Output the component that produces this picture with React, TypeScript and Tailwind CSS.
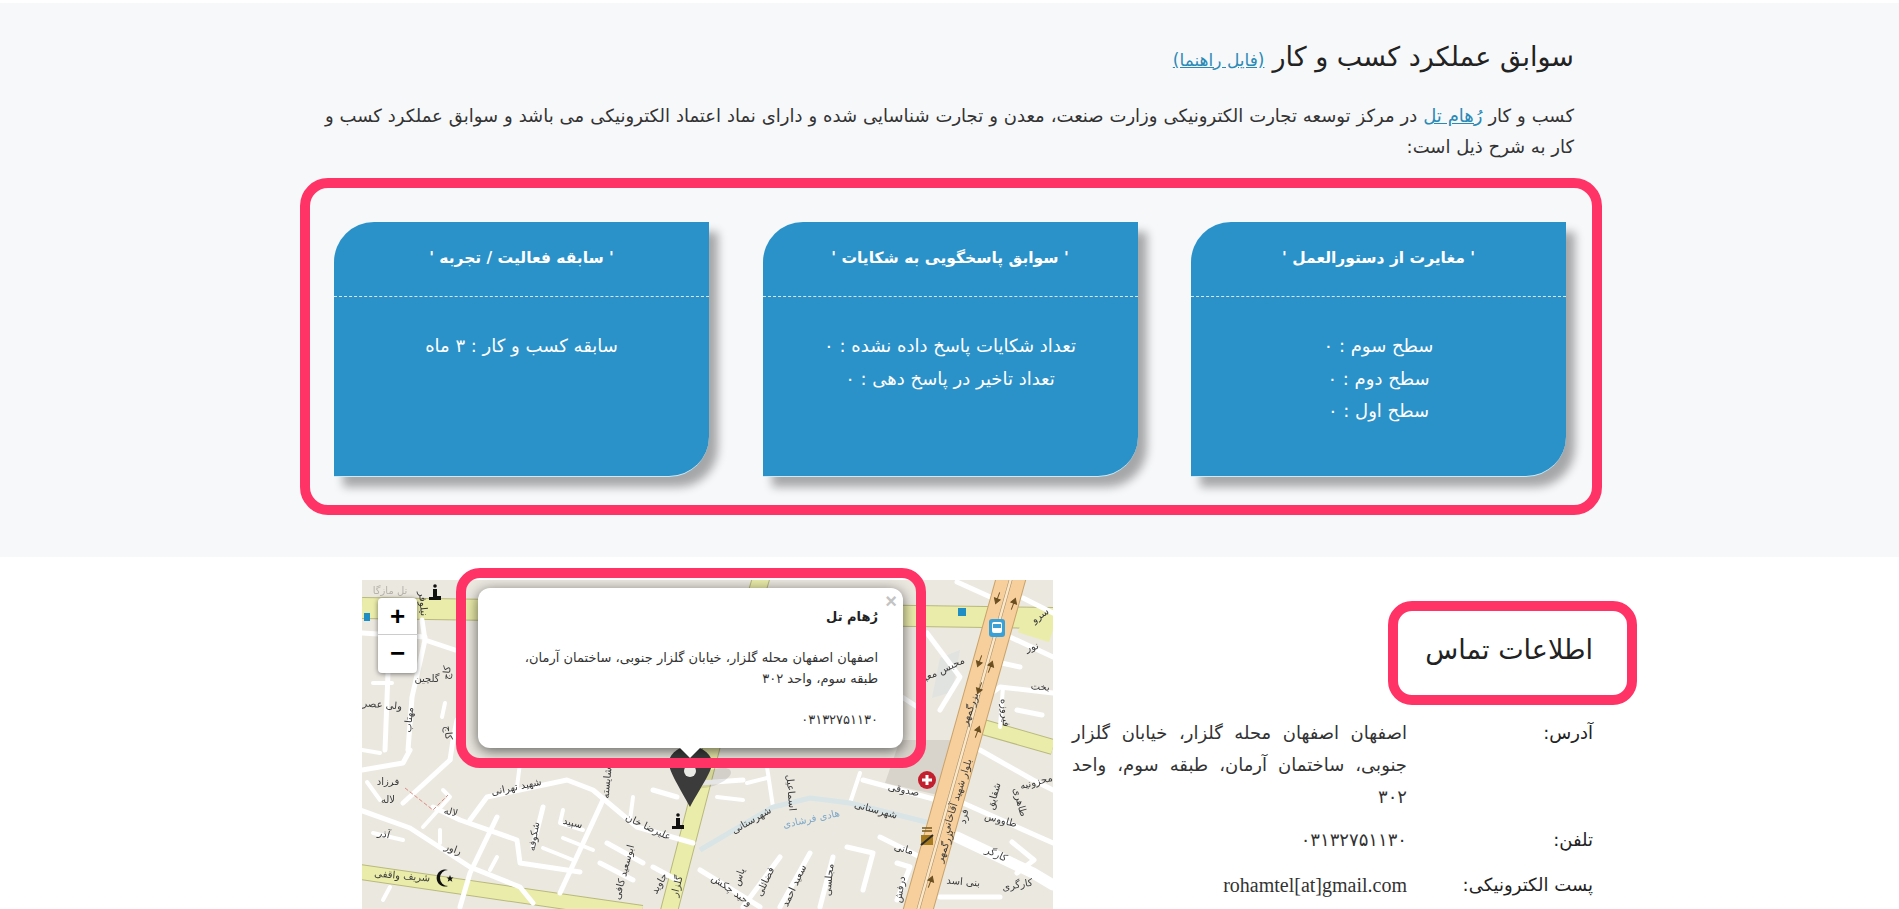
const fa = "font-['DejaVu_Sans',sans-serif]";

const cards = [
  { title: "' مغایرت از دستورالعمل '", lines: ["سطح سوم : ۰", "سطح دوم : ۰", "سطح اول : ۰"] },
  { title: "' سوابق پاسخگویی به شکایات '", lines: ["تعداد شکایات پاسخ داده نشده : ۰", "تعداد تاخیر در پاسخ دهی : ۰"] },
  { title: "' سابقه فعالیت / تجربه '", lines: ["سابقه کسب و کار : ۳ ماه"] },
];

const roads: [number, string][] = [
  [5, "88,180 41,223"],
  [5, "-2,230 48,248 108,287 158,307 171,323"],
  [5, "71,227 98,240 155,260 158,283 218,292"],
  [5, "135,237 108,293 98,327"],
  [5, "108,240 125,217 205,200 231,210 275,247 331,263"],
  [5, "241,220 198,313"],
  [5, "181,227 171,267"],
  [4, "201,230 198,243 221,250"],
  [4, "201,258 231,270"],
  [4, "181,268 211,280"],
  [5, "245,263 281,283"],
  [5, "238,283 271,300"],
  [4, "271,217 268,240"],
  [5, "291,287 315,300"],
  [5, "291,210 315,217"],
  [4, "5,202 18,220"],
  [4, "11,253 41,260"],
  [4, "81,210 88,217 61,247"],
  [5, "88,180 91,160 95,140"],
  [4, "158,183 155,207"],
  [5, "48,170 41,183 0,190"],
  [4, "0,170 18,173"],
  [4, "78,250 78,263"],
  [4, "135,277 128,290"],
  [4, "28,307 21,320"],
  [5, "501,200 575,220"],
  [5, "601,223 691,263"],
  [5, "618,170 671,200 691,210"],
  [4, "405,187 411,227"],
  [4, "498,193 488,223"],
  [5, "518,257 558,277"],
  [11, "595,257 671,293 691,305"],
  [5, "485,267 511,273 501,310"],
  [5, "418,277 381,327"],
  [5, "448,273 418,327"],
  [5, "471,277 458,327"],
  [5, "338,290 398,327"],
  [5, "535,283 548,287 535,320"],
  [5, "578,317 638,317"],
  [5, "338,203 381,200"],
  [4, "355,217 381,220"],
  [4, "385,203 405,198"],
  [5, "595,2 635,20"],
  [5, "661,18 691,33"],
  [5, "648,57 691,77"],
  [5, "565,53 598,97 578,130"],
  [5, "635,82 658,87"],
  [5, "620,120 638,107 691,113"],
  [4, "641,107 638,147"],
  [5, "60,40 63,60 50,117 46,170"],
  [5, "0,53 63,57"],
  [5, "63,60 93,70"],
  [5, "26,93 23,170"],
  [4, "11,103 30,103"],
  [4, "83,123 80,137"],
  [5, "650,262 672,280 655,293"],
  [5, "655,130 680,135"],
  [5, "540,117 560,130"],
];

const labels: [number, number, number, string, string?][] = [
  [26, 205, 0, "فرزاد"],
  [26, 223, 0, "لاله"],
  [88, 235, 15, "لاله"],
  [21, 257, 15, "آذر"],
  [90, 272, 20, "راور"],
  [40, 299, 5, "شریف واقفی"],
  [155, 210, -12, "شهید تهرانی"],
  [175, 257, -80, "شکوفه"],
  [210, 246, 15, "سپید"],
  [285, 250, 25, "علیرضا خان"],
  [265, 293, -75, "ابوسعید کافی"],
  [300, 305, -60, "جاوید"],
  [318, 307, -75, "گلزار"],
  [248, 203, -85, "شایسته"],
  [541, 213, 12, "صدوقی"],
  [513, 233, 15, "شهرستانی"],
  [391, 243, -30, "شهرستانی"],
  [450, 242, -12, "هادی فرشادی", "#7fa9c9"],
  [426, 213, 85, "اسماعیل"],
  [586, 267, -70, "بزرگمهر"],
  [598, 217, -72, "بلوار شهید آقاخانی"],
  [638, 243, 15, "طاووس"],
  [635, 217, -75, "شقایق"],
  [655, 223, 75, "طاهری"],
  [605, 237, -80, "فرد"],
  [633, 277, 25, "کارگر"],
  [541, 272, 15, "مانی"],
  [601, 305, 5, "بنی اسد"],
  [656, 308, -10, "کارگری"],
  [541, 310, -80, "درفش"],
  [380, 298, -70, "یاس"],
  [406, 303, -65, "فضائلی"],
  [435, 307, -65, "سعید احمد"],
  [470, 300, -85, "مجلسی"],
  [368, 313, 35, "وحید چکش"],
  [675, 205, -15, "محزونیه"],
  [581, 93, -25, "محبس معبر"],
  [671, 70, -15, "نور"],
  [678, 110, 5, "بخت"],
  [640, 133, 85, "فیروزه"],
  [611, 130, -70, "بزرگمهر"],
  [680, 38, -35, "سرو"],
  [65, 102, 0, "گلچین"],
  [20, 128, 5, "ولی عصر"],
  [50, 140, -85, "مهتاب"],
  [28, 14, 0, "تل مازگا", "#b5b2aa"],
  [88, 93, -85, "کاج"],
  [58, 24, 85, "نیلوفر"],
  [83, 153, 85, "کاج"],
];

const arrows: [number, number, number][] = [
  [636, 17, 110],
  [651, 25, -70],
  [618, 80, 110],
  [628, 88, -70],
  [618, 107, 110],
  [615, 153, -70],
  [568, 303, -70],
];

function InfoGlyph({ x, y }: { x: number; y: number }) {
  return (
    <g transform={`translate(${x} ${y})`} fill="#111">
      <circle cx="0" cy="-7" r="1.8" />
      <path d="M-2 -4 H2 V3 H6 V7 H-6 V4 H-2 Z" />
    </g>
  );
}

function MapArt() {
  return (
    <svg viewBox="0 0 691 329" className="block w-full h-full blur-[0.5px]">
      <rect width="691" height="329" fill="#ebe8e0" />
      <polygon points="523,203 538,160 591,160 576,215" fill="#d8d3cb" />
      <polygon points="578,78 598,70 590,112 570,118" fill="#e0e3e0" />
      {/* yellow roads */}
      <g fill="none" stroke="#b9b97c">
        <polyline points="0,28 691,38" strokeWidth="22" />
        <polyline points="400,-5 350,165 306,335" strokeWidth="18" />
        <polyline points="-2,292 280,333" strokeWidth="16" />
        <polyline points="621,147 691,167" strokeWidth="16" />
      </g>
      <g fill="none" stroke="#eaecaa">
        <polyline points="0,28 691,38" strokeWidth="20" />
        <polyline points="660,40 691,50" strokeWidth="26" />
        <polyline points="400,-5 350,165 306,335" strokeWidth="16" />
        <polyline points="-2,292 280,333" strokeWidth="14" />
        <polyline points="621,147 691,167" strokeWidth="14" />
      </g>
      {/* white side streets */}
      <g fill="none" stroke="#fff" strokeLinecap="round" strokeLinejoin="round">
        {roads.map(([w, p], i) => (
          <polyline key={i} points={p} strokeWidth={w} />
        ))}
      </g>
      <polyline
        points="338,270 411,227 448,218 488,223 568,243"
        fill="none"
        stroke="#d8e4e6"
        strokeWidth="5"
      />
      <polyline points="43,208 71,230 86,215" fill="none" stroke="#e08a80" strokeWidth="1" strokeDasharray="4 2" />
      {/* highway */}
      <line x1="650" y1="-5" x2="555" y2="334" stroke="#c9a26a" strokeWidth="30" />
      <line x1="650" y1="-5" x2="555" y2="334" stroke="#f6cf9c" strokeWidth="28" />
      <line x1="650" y1="-5" x2="555" y2="334" stroke="#a08a68" strokeWidth="3.5" />
      <line x1="650" y1="-5" x2="555" y2="334" stroke="#fbe6c6" strokeWidth="2.5" />
      {arrows.map(([x, y, r], i) => (
        <path
          key={i}
          d="M-5 0 H2 M2 -3 L7 0 L2 3 Z"
          transform={`translate(${x} ${y}) rotate(${r})`}
          stroke="#6b4e20"
          fill="#6b4e20"
        />
      ))}
      {/* labels */}
      <g className={fa} fontSize="10" textAnchor="middle">
        {labels.map(([x, y, r, t, c], i) => (
          <text key={i} x={x} y={y} fill={c ?? "#3a3a3a"} transform={`rotate(${r} ${x} ${y})`}>
            {t}
          </text>
        ))}
      </g>
      {/* map symbols */}
      <rect x="596" y="28" width="8" height="8" fill="#1f8ec4" />
      <rect x="2" y="33" width="6" height="8" fill="#1f8ec4" />
      <g transform="translate(635 48)">
        <rect x="-8" y="-9" width="16" height="18" rx="3" fill="#3aa0d8" />
        <rect x="-5" y="-6" width="10" height="11" rx="2" fill="#fff" />
        <rect x="-4" y="-4" width="8" height="4" fill="#3aa0d8" />
      </g>
      <circle cx="565" cy="200" r="9" fill="#c3202f" />
      <path d="M565 195 V205 M560 200 H570" stroke="#fff" strokeWidth="3" />
      <rect x="559" y="255" width="12" height="10" fill="#a67a1e" />
      <path d="M559 265 L571 255" stroke="#2b2b2b" strokeWidth="2" />
      <path d="M560 248 H570 M560 251 H570" stroke="#7a5a18" strokeWidth="1.5" />
      <InfoGlyph x={316} y={242} />
      <InfoGlyph x={73} y={13} />
      <path d="M86 290 A8.5 8.5 0 1 0 86 306 A6.5 6.5 0 1 1 86 290 Z" fill="#111" />
      <path d="M88 295 l1 2.5 2.5 0 -2 1.6 .8 2.6 -2.3 -1.5 -2.3 1.5 .8 -2.6 -2 -1.6 2.5 0 Z" fill="#111" />
      {/* marker */}
      <ellipse cx="350" cy="198" rx="20" ry="8" fill="#000" opacity="0.1" transform="rotate(-20 350 198)" />
      <path d="M328 227 C318 208 307 192 307 183 C307 174 317 166 328 166 C339 166 350 174 350 183 C350 192 338 208 328 227 Z" fill="#3b3b3b" />
      <circle cx="328" cy="191" r="6" fill="#e9e9e6" />
    </svg>
  );
}

export default function App() {
  return (
    <div dir="rtl" className={`h-[909px] overflow-hidden bg-white text-[#222] ${fa}`}>
      {/* ── سوابق section ── */}
      <section className="mt-[3px] h-[554px] bg-[#f7f8fa] pr-[297px]">
        <div className="w-[1302px] pt-[32px]">
          <h2 className="pr-[28px] text-[27px] leading-[44px] text-[#222] flex items-baseline gap-[8px]">
            سوابق عملکرد کسب و کار
            <a className="text-[17px] text-[#2b8ab5] underline">(فایل راهنما)</a>
          </h2>
          <p className="mt-[18px] mr-[28px] w-[1249px] text-[18px] leading-[31px] text-justify text-[#333]">
            کسب و کار <a className="text-[#2b8ab5] underline">رُهام تل</a> در مرکز توسعه تجارت الکترونیکی وزارت صنعت، معدن و تجارت شناسایی شده و دارای نماد اعتماد الکترونیکی می باشد و سوابق عملکرد کسب و کار به شرح ذیل است:
          </p>
          <div className="mt-[16px] h-[337px] border-[10px] border-[#ff3366] rounded-[28px] pt-[34px] pr-[26px]">
            <div className="flex gap-[53.5px]">
              {cards.map((c) => (
                <div
                  key={c.title}
                  className="w-[375px] h-[255px] bg-[#2b92c9] rounded-tl-[40px] rounded-br-[40px] border-b border-[#cdeaf5] shadow-[9px_10px_10px_rgba(0,0,0,0.33)] text-white text-center"
                >
                  <div className="h-[75px] border-b border-dashed border-[#d5e8f2] flex items-center justify-center text-[15.5px] font-bold">
                    {c.title}
                  </div>
                  <div className="pt-[33px] text-[18px] leading-[32.5px]">
                    {c.lines.map((l) => (
                      <div key={l}>{l}</div>
                    ))}
                  </div>
                </div>
              ))}
            </div>
          </div>
        </div>
      </section>

      {/* ── contact + map ── */}
      <section className="flex items-start pr-[262px]">
        <div className="w-[565px] mt-[44px] shrink-0">
          <div className="w-[249px] h-[104px] border-[10px] border-[#ff3366] rounded-[24px] flex items-center pr-[34px] pb-[6px] text-[27px] text-[#222]">
            اطلاعات تماس
          </div>
          <div className="mt-[12px] pr-[44px] text-[18px] leading-[32px] text-[#333]">
            <div className="flex">
              <span className="w-[186px] shrink-0 text-[#222]">آدرس:</span>
              <p className="w-[335px] text-justify">
                اصفهان اصفهان محله گلزار، خیابان گلزار جنوبی، ساختمان آرمان، طبقه سوم، واحد ۳۰۲
              </p>
            </div>
            <div className="flex mt-[11px]">
              <span className="w-[186px] shrink-0 text-[#222]">تلفن:</span>
              <span>۰۳۱۳۲۷۵۱۱۳۰</span>
            </div>
            <div className="flex mt-[13px]">
              <span className="w-[186px] shrink-0 text-[#222]">پست الکترونیکی:</span>
              <span className="font-['Liberation_Serif',serif] text-[20px]">rohamtel[at]gmail.com</span>
            </div>
          </div>
        </div>

        <div className="relative mt-[23px] mr-[19px] w-[691px] h-[329px] shrink-0">
          <MapArt />
          {/* zoom control */}
          <div dir="ltr" className="absolute left-[16px] top-[18px] w-[39px] rounded-[4px] bg-white shadow-[0_1px_5px_rgba(0,0,0,0.5)] text-black font-bold text-center font-['Liberation_Sans',sans-serif]">
            <div className="h-[37px] text-[26px] leading-[36px] border-b border-[#ccc]">+</div>
            <div className="h-[38px] text-[26px] leading-[36px]">−</div>
          </div>
          {/* popup with highlight frame */}
          <div className="absolute left-[94px] top-[-12px] w-[470px] h-[200px] border-[10px] border-[#ff3366] rounded-[24px] overflow-hidden">
            <div className="pr-[13px] pl-[12px] pt-[10px]">
              <div className="relative h-[160px] rounded-[12px] bg-white shadow-[0_3px_14px_rgba(0,0,0,0.6)] pr-[25px] pl-[34px] pt-[17px] text-[13px] text-[#333]">
                <span className="absolute right-[6px] top-[3px] text-[#c3c3c3] text-[20px] font-bold leading-none font-['Liberation_Sans',sans-serif]">×</span>
                <div className="font-bold text-[#222] leading-[24px]">رُهام تل</div>
                <p className="mt-[18px] leading-[21px]">
                  اصفهان اصفهان محله گلزار، خیابان گلزار جنوبی، ساختمان آرمان، طبقه سوم، واحد ۳۰۲
                </p>
                <div className="mt-[20px] leading-[21px]">۰۳۱۳۲۷۵۱۱۳۰</div>
                <div className="absolute left-[202px] top-full w-[20px] h-[10px] bg-white [clip-path:polygon(0_0,100%_0,50%_100%)]" />
              </div>
            </div>
          </div>
        </div>
      </section>
    </div>
  );
}
